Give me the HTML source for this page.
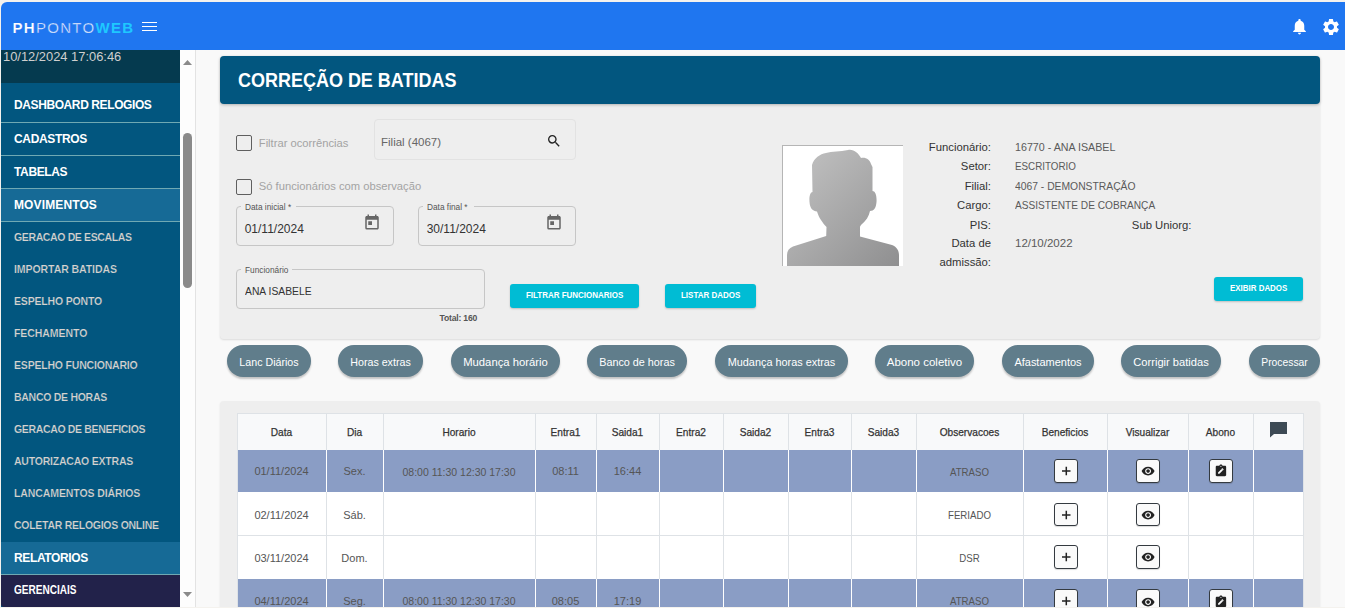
<!DOCTYPE html>
<html><head><meta charset="utf-8">
<style>
*{box-sizing:border-box;margin:0;padding:0}
html,body{width:1345px;height:608px;overflow:hidden;background:#f4f2ee;font-family:"Liberation Sans",sans-serif}
.a{position:absolute}
.t{position:absolute;line-height:1;white-space:nowrap}
#app{position:absolute;left:1px;top:2px;width:1344px;height:605px;background:#f9f9f9;border-top-left-radius:6px;overflow:hidden}
</style></head><body>
<div id="app"></div>

<!-- top bar -->
<div class="a" style="left:1px;top:2px;width:1344px;height:48px;background:#1f76f0;border-top-left-radius:6px"></div>
<div class="t" style="left:12.5px;top:20.4px;font-size:15px;letter-spacing:1.3px;color:#fff"><b style="-webkit-text-stroke:0.2px #1f76f0">PH</b><span style="font-weight:400;-webkit-text-stroke:0.45px #1f76f0">PONTO</span><b style="color:#1ec8ff">WEB</b></div>
<div class="a" style="left:142px;top:22px;width:15px;height:1.4px;background:#fff"></div>
<div class="a" style="left:142px;top:26px;width:15px;height:1.4px;background:#fff"></div>
<div class="a" style="left:142px;top:30px;width:15px;height:1.4px;background:#fff"></div>

<svg class="a" style="left:1290px;top:17px" width="19" height="19" viewBox="0 0 24 24"><path fill="#fff" d="M12 22c1.1 0 2-.9 2-2h-4c0 1.1.9 2 2 2zm6-6v-5c0-3.07-1.64-5.64-4.5-6.32V4c0-.83-.67-1.5-1.5-1.5s-1.5.67-1.5 1.5v.68C7.63 5.36 6 7.92 6 11v5l-2 2v1h16v-1l-2-2z"/></svg>
<svg class="a" style="left:1321px;top:16.5px" width="20" height="20" viewBox="0 0 24 24"><path fill="#fff" d="M19.14 12.94c.04-.3.06-.61.06-.94 0-.32-.02-.64-.07-.94l2.03-1.58a.49.49 0 0 0 .12-.61l-1.92-3.32a.488.488 0 0 0-.59-.22l-2.39.96c-.5-.38-1.03-.7-1.62-.94l-.36-2.54a.484.484 0 0 0-.48-.41h-3.84c-.24 0-.43.17-.47.41l-.36 2.54c-.59.24-1.13.57-1.62.94l-2.39-.96c-.22-.08-.47 0-.59.22L2.74 8.87c-.12.21-.08.47.12.61l2.03 1.58c-.05.3-.09.63-.09.94s.02.64.07.94l-2.03 1.58a.49.49 0 0 0-.12.61l1.92 3.32c.12.22.37.29.59.22l2.39-.96c.5.38 1.03.7 1.62.94l.36 2.54c.05.24.24.41.48.41h3.84c.24 0 .44-.17.47-.41l.36-2.54c.59-.24 1.13-.56 1.62-.94l2.39.96c.22.08.47 0 .59-.22l1.92-3.32c.12-.22.07-.47-.12-.61l-2.01-1.58zM12 15.6c-1.98 0-3.6-1.62-3.6-3.6s1.62-3.6 3.6-3.6 3.6 1.62 3.6 3.6-1.62 3.6-3.6 3.6z"/></svg>

<!-- sidebar -->
<div class="a" style="left:1px;top:50px;width:179px;height:557px;background:#02567f"></div>
<div class="a" style="left:1px;top:50px;width:179px;height:33px;background:#053a4f"></div>
<div class="t" style="left:3px;top:50.5px;font-size:12.9px;color:#cfcfcf">10/12/2024 17:06:46</div>

<div class="a" style="left:1px;top:188px;width:179px;height:33px;background:#166a96"></div>
<div class="a" style="left:1px;top:542px;width:179px;height:32px;background:#166a96"></div>
<div class="a" style="left:1px;top:575px;width:179px;height:32px;background:#22224a;border-bottom-left-radius:3px"></div>
<div class="a" style="left:1px;top:122px;width:179px;height:1px;background:#6fa9b3"></div>
<div class="a" style="left:1px;top:155px;width:179px;height:1px;background:#6fa9b3"></div>
<div class="a" style="left:1px;top:188px;width:179px;height:1px;background:#6fa9b3"></div>
<div class="a" style="left:1px;top:221px;width:179px;height:1px;background:#6fa9b3"></div>
<div class="a" style="left:1px;top:574px;width:179px;height:1px;background:#6fa9b3"></div>

<div class="t" style="left:14px;top:98.7px;font-size:12px;font-weight:700;letter-spacing:-0.4px;color:#fff">DASHBOARD RELOGIOS</div>
<div class="t" style="left:14px;top:132.9px;font-size:12px;font-weight:700;letter-spacing:-0.34px;color:#fff">CADASTROS</div>
<div class="t" style="left:14px;top:165.7px;font-size:12px;font-weight:700;letter-spacing:-0.36px;color:#fff">TABELAS</div>
<div class="t" style="left:14px;top:198.5px;font-size:12px;font-weight:700;letter-spacing:0.12px;color:#fff">MOVIMENTOS</div>

<div class="t" style="left:14px;top:231.9px;font-size:10.5px;font-weight:700;letter-spacing:-0.37px;-webkit-text-stroke:0.2px #02567f;color:#d6d3d0">GERACAO DE ESCALAS</div>
<div class="t" style="left:14px;top:263.9px;font-size:10.5px;font-weight:700;letter-spacing:-0.07px;-webkit-text-stroke:0.2px #02567f;color:#d6d3d0">IMPORTAR BATIDAS</div>
<div class="t" style="left:14px;top:295.9px;font-size:10.5px;font-weight:700;letter-spacing:-0.17px;-webkit-text-stroke:0.2px #02567f;color:#d6d3d0">ESPELHO PONTO</div>
<div class="t" style="left:14px;top:327.9px;font-size:10.5px;font-weight:700;letter-spacing:-0.06px;-webkit-text-stroke:0.2px #02567f;color:#d6d3d0">FECHAMENTO</div>
<div class="t" style="left:14px;top:359.9px;font-size:10.5px;font-weight:700;letter-spacing:-0.19px;-webkit-text-stroke:0.2px #02567f;color:#d6d3d0">ESPELHO FUNCIONARIO</div>
<div class="t" style="left:14px;top:391.9px;font-size:10.5px;font-weight:700;letter-spacing:-0.28px;-webkit-text-stroke:0.2px #02567f;color:#d6d3d0">BANCO DE HORAS</div>
<div class="t" style="left:14px;top:423.9px;font-size:10.5px;font-weight:700;letter-spacing:-0.34px;-webkit-text-stroke:0.2px #02567f;color:#d6d3d0">GERACAO DE BENEFICIOS</div>
<div class="t" style="left:14px;top:455.9px;font-size:10.5px;font-weight:700;letter-spacing:-0.21px;-webkit-text-stroke:0.2px #02567f;color:#d6d3d0">AUTORIZACAO EXTRAS</div>
<div class="t" style="left:14px;top:487.9px;font-size:10.5px;font-weight:700;letter-spacing:-0.1px;-webkit-text-stroke:0.2px #02567f;color:#d6d3d0">LANCAMENTOS DIÁRIOS</div>
<div class="t" style="left:14px;top:519.9px;font-size:10.5px;font-weight:700;letter-spacing:-0.27px;-webkit-text-stroke:0.2px #02567f;color:#d6d3d0">COLETAR RELOGIOS ONLINE</div>
<div class="t" style="left:14px;top:551.5px;font-size:12px;font-weight:700;letter-spacing:-0.36px;color:#fff">RELATORIOS</div>
<div class="t" style="left:14px;top:584.2px;font-size:12px;font-weight:700;transform:scaleX(0.838);transform-origin:0 0;color:#fff">GERENCIAIS</div>

<!-- sidebar scrollbar -->
<div class="a" style="left:180px;top:50px;width:15px;height:557px;background:#fdfdfd"></div>
<div class="a" style="left:195px;top:50px;width:1px;height:557px;background:#e3e3e3"></div>
<div class="a" style="left:183px;top:133px;width:9px;height:155px;background:#8a8a8a;border-radius:5px"></div>
<svg class="a" style="left:182px;top:59px" width="11" height="7"><path d="M1 6 L5.5 1 L10 6Z" fill="#8a8a8a"/></svg>
<svg class="a" style="left:182px;top:590.8px" width="11" height="7"><path d="M1 1 L5.5 6 L10 1Z" fill="#8a8a8a"/></svg>


<!-- main cards -->
<div class="a" style="left:220px;top:56px;width:1100px;height:283px;background:#eeeeee;border-radius:4px;box-shadow:0 1px 2px rgba(0,0,0,0.12)"></div>
<div class="a" style="left:220px;top:56px;width:1100px;height:48px;background:#02567f;border-radius:4px;box-shadow:0 1px 3px rgba(0,0,0,0.25)"></div>
<div class="t" style="left:238px;top:70px;font-size:20px;font-weight:700;transform:scaleX(0.899);transform-origin:0 0;color:#fff">CORREÇÃO DE BATIDAS</div>

<!-- checkboxes -->
<div class="a" style="left:236px;top:135px;width:16px;height:16px;border:1.6px solid #5f5f5f;border-radius:2px"></div>
<div class="t" style="left:258.8px;top:138.3px;font-size:11.2px;color:#a3a3a3">Filtrar ocorrências</div>
<div class="a" style="left:236px;top:179px;width:16px;height:16px;border:1.6px solid #5f5f5f;border-radius:2px"></div>
<div class="t" style="left:258.8px;top:181.3px;font-size:11.2px;color:#a3a3a3">Só funcionários com observação</div>

<!-- filial -->
<div class="a" style="left:373.5px;top:118.5px;width:202px;height:41px;border:1px solid #e2e2e2;border-radius:4px"></div>
<div class="t" style="left:381px;top:136.6px;font-size:11.5px;color:#666">Filial (4067)</div>
<svg class="a" style="left:546px;top:133px" width="16" height="16" viewBox="0 0 24 24"><path fill="#222" d="M15.5 14h-.79l-.28-.27A6.471 6.471 0 0 0 16 9.5 6.5 6.5 0 1 0 9.5 16c1.61 0 3.09-.59 4.23-1.57l.27.28v.79l5 4.99L20.49 19l-4.99-5zm-6 0C7.01 14 5 11.99 5 9.5S7.01 5 9.5 5 14 7.01 14 9.5 11.99 14 9.5 14z"/></svg>

<!-- date fields -->
<div class="a" style="left:236px;top:206.2px;width:157.5px;height:40px;border:1px solid #c6c6c6;border-radius:4px"></div>
<div class="a" style="left:241px;top:205px;width:55px;height:3px;background:#eeeeee"></div>
<div class="t" style="left:245px;top:203.2px;font-size:8.3px;color:#555">Data inicial *</div>
<div class="t" style="left:244.7px;top:223.3px;font-size:12px;color:#333">01/11/2024</div>
<svg class="a" style="left:362.8px;top:212.8px" width="18" height="18" viewBox="0 0 24 24"><path fill="#666" d="M19 4h-1V2h-2v2H8V2H6v2H5c-1.11 0-2 .9-2 2v14a2 2 0 0 0 2 2h14c1.1 0 2-.9 2-2V6c0-1.1-.9-2-2-2zm0 16H5V9h14v11zM7 11h5v5H7z"/></svg>

<div class="a" style="left:418px;top:206.2px;width:157.5px;height:40px;border:1px solid #c6c6c6;border-radius:4px"></div>
<div class="a" style="left:423px;top:205px;width:51px;height:3px;background:#eeeeee"></div>
<div class="t" style="left:427px;top:203.2px;font-size:8.3px;color:#555">Data final *</div>
<div class="t" style="left:426.7px;top:223.3px;font-size:12px;color:#333">30/11/2024</div>
<svg class="a" style="left:544.8px;top:212.8px" width="18" height="18" viewBox="0 0 24 24"><path fill="#666" d="M19 4h-1V2h-2v2H8V2H6v2H5c-1.11 0-2 .9-2 2v14a2 2 0 0 0 2 2h14c1.1 0 2-.9 2-2V6c0-1.1-.9-2-2-2zm0 16H5V9h14v11zM7 11h5v5H7z"/></svg>

<!-- funcionario -->
<div class="a" style="left:236px;top:268.5px;width:249px;height:40px;border:1px solid #c6c6c6;border-radius:4px"></div>
<div class="a" style="left:241px;top:267px;width:51px;height:3px;background:#eeeeee"></div>
<div class="t" style="left:245px;top:265.5px;font-size:8.3px;color:#555">Funcionário</div>
<div class="t" style="left:244.7px;top:285.2px;font-size:11.7px;transform:scaleX(0.883);transform-origin:0 0;color:#333">ANA ISABELE</div>
<div class="t" style="left:439.6px;top:313.9px;font-size:8.6px;font-weight:700;letter-spacing:-0.2px;color:#555">Total: 160</div>

<!-- buttons -->
<div class="a" style="left:510px;top:284px;width:129px;height:24px;background:#00bcd4;border-radius:3px;box-shadow:0 1px 2px rgba(0,0,0,0.2)"></div>
<div class="t" style="left:526px;top:289.6px;font-size:9.5px;font-weight:700;transform:scaleX(0.839);transform-origin:0 0;color:#fff">FILTRAR FUNCIONARIOS</div>
<div class="a" style="left:665px;top:284px;width:91px;height:24px;background:#00bcd4;border-radius:3px;box-shadow:0 1px 2px rgba(0,0,0,0.2)"></div>
<div class="t" style="left:681px;top:289.6px;font-size:9.5px;font-weight:700;transform:scaleX(0.84);transform-origin:0 0;color:#fff">LISTAR DADOS</div>
<div class="a" style="left:1214px;top:277px;width:89px;height:23.5px;background:#00bcd4;border-radius:3px;box-shadow:0 1px 2px rgba(0,0,0,0.2)"></div>
<div class="t" style="left:1230px;top:282.8px;font-size:9.5px;font-weight:700;transform:scaleX(0.835);transform-origin:0 0;color:#fff">EXIBIR DADOS</div>


<!-- photo -->
<div class="a" style="left:782px;top:145px;width:120.5px;height:121px;background:#fff;border-top:1px solid #b5b5b5;border-left:1px solid #b5b5b5"></div>
<svg class="a" style="left:782px;top:145px" width="121" height="121" viewBox="0 0 121 121">
<defs><linearGradient id="g" x1="0" y1="0" x2="1" y2="1"><stop offset="0" stop-color="#c4c4c4"/><stop offset="1" stop-color="#8f8f90"/></linearGradient></defs>
<path fill="url(#g)" d="M66 5 C72 4 76 8 79 13 C84 12 88 15 89 19 L90.5 22 L90.5 46 C93 46 95 50 94.5 57 C94 63 92 66 88 66 C87 71 84 76 79 80 L78 81.7 L78 91.5 L110 100 C115 102 117 106 117 110 L117 121 L5 121 L5 110 C5 106 7 103 11 101.5 L44.2 91 L44.5 82 C40 77 37 73 35 66.5 C31 66 28 64 27.5 57 C27 51 28.5 47 30.5 47 L30 20 C32 13 38 9 44 8 C50 6 58 7 66 5Z"/>
</svg>

<div class="t" style="left:850px;width:141px;text-align:right;top:142.3px;font-size:11.3px;color:#333">Funcionário:</div>
<div class="t" style="left:1014.8px;top:142.3px;font-size:11px;transform:scaleX(0.972);transform-origin:0 0;color:#5a5a5a">16770 - ANA ISABEL</div>
<div class="t" style="left:850px;width:141px;text-align:right;top:161.1px;font-size:11.3px;color:#333">Setor:</div>
<div class="t" style="left:1014.8px;top:161.1px;font-size:11px;transform:scaleX(0.893);transform-origin:0 0;color:#5a5a5a">ESCRITORIO</div>
<div class="t" style="left:850px;width:141px;text-align:right;top:180.7px;font-size:11.3px;color:#333">Filial:</div>
<div class="t" style="left:1014.8px;top:180.7px;font-size:11px;transform:scaleX(0.939);transform-origin:0 0;color:#5a5a5a">4067 - DEMONSTRAÇÃO</div>
<div class="t" style="left:850px;width:141px;text-align:right;top:200.0px;font-size:11.3px;color:#333">Cargo:</div>
<div class="t" style="left:1014.8px;top:200.0px;font-size:11px;transform:scaleX(0.921);transform-origin:0 0;color:#5a5a5a">ASSISTENTE DE COBRANÇA</div>
<div class="t" style="left:850px;width:141px;text-align:right;top:219.5px;font-size:11.3px;color:#333">PIS:</div>
<div class="t" style="left:850px;width:141px;text-align:right;top:238.2px;font-size:11.3px;color:#333">Data de</div>
<div class="t" style="left:1014.8px;top:238.2px;font-size:11px;transform:scaleX(1.045);transform-origin:0 0;color:#5a5a5a">12/10/2022</div>
<div class="t" style="left:850px;width:141px;text-align:right;top:257.3px;font-size:11.3px;color:#333">admissão:</div>
<div class="t" style="left:1050px;width:141.5px;text-align:right;top:219.5px;font-size:11.3px;color:#333">Sub Uniorg:</div>

<!-- pills -->
<div class="a" style="left:227px;top:345px;width:84px;height:32px;border-radius:16px;background:#607d8b;box-shadow:0 2px 2px rgba(0,0,0,0.22)"></div>
<div class="t" style="left:227px;width:84px;text-align:center;top:357.3px;font-size:11.5px;transform:scaleX(0.927);color:#fff">Lanc Diários</div>
<div class="a" style="left:338px;top:345px;width:85px;height:32px;border-radius:16px;background:#607d8b;box-shadow:0 2px 2px rgba(0,0,0,0.22)"></div>
<div class="t" style="left:338px;width:85px;text-align:center;top:357.3px;font-size:11.5px;transform:scaleX(0.928);color:#fff">Horas extras</div>
<div class="a" style="left:451px;top:345px;width:109px;height:32px;border-radius:16px;background:#607d8b;box-shadow:0 2px 2px rgba(0,0,0,0.22)"></div>
<div class="t" style="left:451px;width:109px;text-align:center;top:357.3px;font-size:11.5px;transform:scaleX(0.981);color:#fff">Mudança horário</div>
<div class="a" style="left:587px;top:345px;width:100px;height:32px;border-radius:16px;background:#607d8b;box-shadow:0 2px 2px rgba(0,0,0,0.22)"></div>
<div class="t" style="left:587px;width:100px;text-align:center;top:357.3px;font-size:11.5px;transform:scaleX(0.939);color:#fff">Banco de horas</div>
<div class="a" style="left:715px;top:345px;width:133px;height:32px;border-radius:16px;background:#607d8b;box-shadow:0 2px 2px rgba(0,0,0,0.22)"></div>
<div class="t" style="left:715px;width:133px;text-align:center;top:357.3px;font-size:11.5px;transform:scaleX(0.945);color:#fff">Mudança horas extras</div>
<div class="a" style="left:875px;top:345px;width:99px;height:32px;border-radius:16px;background:#607d8b;box-shadow:0 2px 2px rgba(0,0,0,0.22)"></div>
<div class="t" style="left:875px;width:99px;text-align:center;top:357.3px;font-size:11.5px;transform:scaleX(1.000);color:#fff">Abono coletivo</div>
<div class="a" style="left:1002px;top:345px;width:92px;height:32px;border-radius:16px;background:#607d8b;box-shadow:0 2px 2px rgba(0,0,0,0.22)"></div>
<div class="t" style="left:1002px;width:92px;text-align:center;top:357.3px;font-size:11.5px;transform:scaleX(0.956);color:#fff">Afastamentos</div>
<div class="a" style="left:1121px;top:345px;width:100px;height:32px;border-radius:16px;background:#607d8b;box-shadow:0 2px 2px rgba(0,0,0,0.22)"></div>
<div class="t" style="left:1121px;width:100px;text-align:center;top:357.3px;font-size:11.5px;transform:scaleX(0.967);color:#fff">Corrigir batidas</div>
<div class="a" style="left:1249px;top:345px;width:71px;height:32px;border-radius:16px;background:#607d8b;box-shadow:0 2px 2px rgba(0,0,0,0.22)"></div>
<div class="t" style="left:1249px;width:71px;text-align:center;top:357.3px;font-size:11.5px;transform:scaleX(0.898);color:#fff">Processar</div>

<!-- table -->
<div class="a" style="left:220px;top:401px;width:1100px;height:220px;background:#eeeeee;border-radius:4px;box-shadow:0 1px 2px rgba(0,0,0,0.1)"></div>
<div class="a" style="left:237px;top:413px;width:1066px;height:37px;background:#f8f9fa"></div>
<div class="a" style="left:237px;top:450px;width:1066px;height:42px;background:#8a9dc5"></div>
<div class="a" style="left:237px;top:492px;width:1066px;height:87px;background:#ffffff"></div>
<div class="a" style="left:237px;top:579px;width:1066px;height:43px;background:#8a9dc5"></div>
<div class="a" style="left:237px;top:413px;width:1066px;height:1px;background:#dee2e6"></div>
<div class="a" style="left:237px;top:535px;width:1066px;height:1px;background:#dee2e6"></div>
<div class="a" style="left:237px;top:413px;width:1px;height:200px;background:#dee2e6"></div>
<div class="a" style="left:326px;top:413px;width:1px;height:200px;background:#dee2e6"></div>
<div class="a" style="left:383px;top:413px;width:1px;height:200px;background:#dee2e6"></div>
<div class="a" style="left:535px;top:413px;width:1px;height:200px;background:#dee2e6"></div>
<div class="a" style="left:596px;top:413px;width:1px;height:200px;background:#dee2e6"></div>
<div class="a" style="left:659px;top:413px;width:1px;height:200px;background:#dee2e6"></div>
<div class="a" style="left:723px;top:413px;width:1px;height:200px;background:#dee2e6"></div>
<div class="a" style="left:788px;top:413px;width:1px;height:200px;background:#dee2e6"></div>
<div class="a" style="left:851px;top:413px;width:1px;height:200px;background:#dee2e6"></div>
<div class="a" style="left:916px;top:413px;width:1px;height:200px;background:#dee2e6"></div>
<div class="a" style="left:1023px;top:413px;width:1px;height:200px;background:#dee2e6"></div>
<div class="a" style="left:1107px;top:413px;width:1px;height:200px;background:#dee2e6"></div>
<div class="a" style="left:1188px;top:413px;width:1px;height:200px;background:#dee2e6"></div>
<div class="a" style="left:1253px;top:413px;width:1px;height:200px;background:#dee2e6"></div>
<div class="a" style="left:1303px;top:413px;width:1px;height:200px;background:#dee2e6"></div>
<div class="a" style="left:326px;top:450px;width:1px;height:42px;background:#fff"></div>
<div class="a" style="left:326px;top:579px;width:1px;height:43px;background:#fff"></div>
<div class="a" style="left:383px;top:450px;width:1px;height:42px;background:#fff"></div>
<div class="a" style="left:383px;top:579px;width:1px;height:43px;background:#fff"></div>
<div class="a" style="left:535px;top:450px;width:1px;height:42px;background:#fff"></div>
<div class="a" style="left:535px;top:579px;width:1px;height:43px;background:#fff"></div>
<div class="a" style="left:596px;top:450px;width:1px;height:42px;background:#fff"></div>
<div class="a" style="left:596px;top:579px;width:1px;height:43px;background:#fff"></div>
<div class="a" style="left:659px;top:450px;width:1px;height:42px;background:#fff"></div>
<div class="a" style="left:659px;top:579px;width:1px;height:43px;background:#fff"></div>
<div class="a" style="left:723px;top:450px;width:1px;height:42px;background:#fff"></div>
<div class="a" style="left:723px;top:579px;width:1px;height:43px;background:#fff"></div>
<div class="a" style="left:788px;top:450px;width:1px;height:42px;background:#fff"></div>
<div class="a" style="left:788px;top:579px;width:1px;height:43px;background:#fff"></div>
<div class="a" style="left:851px;top:450px;width:1px;height:42px;background:#fff"></div>
<div class="a" style="left:851px;top:579px;width:1px;height:43px;background:#fff"></div>
<div class="a" style="left:916px;top:450px;width:1px;height:42px;background:#fff"></div>
<div class="a" style="left:916px;top:579px;width:1px;height:43px;background:#fff"></div>
<div class="a" style="left:1023px;top:450px;width:1px;height:42px;background:#fff"></div>
<div class="a" style="left:1023px;top:579px;width:1px;height:43px;background:#fff"></div>
<div class="a" style="left:1107px;top:450px;width:1px;height:42px;background:#fff"></div>
<div class="a" style="left:1107px;top:579px;width:1px;height:43px;background:#fff"></div>
<div class="a" style="left:1188px;top:450px;width:1px;height:42px;background:#fff"></div>
<div class="a" style="left:1188px;top:579px;width:1px;height:43px;background:#fff"></div>
<div class="a" style="left:1253px;top:450px;width:1px;height:42px;background:#fff"></div>
<div class="a" style="left:1253px;top:579px;width:1px;height:43px;background:#fff"></div>
<div class="t" style="left:237px;width:89px;text-align:center;top:426.7px;font-size:11px;transform:scaleX(0.92);-webkit-text-stroke:0.25px #333;color:#333">Data</div>
<div class="t" style="left:326px;width:57px;text-align:center;top:426.7px;font-size:11px;transform:scaleX(0.92);-webkit-text-stroke:0.25px #333;color:#333">Dia</div>
<div class="t" style="left:383px;width:152px;text-align:center;top:426.7px;font-size:11px;transform:scaleX(0.92);-webkit-text-stroke:0.25px #333;color:#333">Horario</div>
<div class="t" style="left:535px;width:61px;text-align:center;top:426.7px;font-size:11px;transform:scaleX(0.92);-webkit-text-stroke:0.25px #333;color:#333">Entra1</div>
<div class="t" style="left:596px;width:63px;text-align:center;top:426.7px;font-size:11px;transform:scaleX(0.92);-webkit-text-stroke:0.25px #333;color:#333">Saida1</div>
<div class="t" style="left:659px;width:64px;text-align:center;top:426.7px;font-size:11px;transform:scaleX(0.92);-webkit-text-stroke:0.25px #333;color:#333">Entra2</div>
<div class="t" style="left:723px;width:65px;text-align:center;top:426.7px;font-size:11px;transform:scaleX(0.92);-webkit-text-stroke:0.25px #333;color:#333">Saida2</div>
<div class="t" style="left:788px;width:63px;text-align:center;top:426.7px;font-size:11px;transform:scaleX(0.92);-webkit-text-stroke:0.25px #333;color:#333">Entra3</div>
<div class="t" style="left:851px;width:65px;text-align:center;top:426.7px;font-size:11px;transform:scaleX(0.92);-webkit-text-stroke:0.25px #333;color:#333">Saida3</div>
<div class="t" style="left:916px;width:107px;text-align:center;top:426.7px;font-size:11px;transform:scaleX(0.92);-webkit-text-stroke:0.25px #333;color:#333">Observacoes</div>
<div class="t" style="left:1023px;width:84px;text-align:center;top:426.7px;font-size:11px;transform:scaleX(0.92);-webkit-text-stroke:0.25px #333;color:#333">Beneficios</div>
<div class="t" style="left:1107px;width:81px;text-align:center;top:426.7px;font-size:11px;transform:scaleX(0.92);-webkit-text-stroke:0.25px #333;color:#333">Visualizar</div>
<div class="t" style="left:1188px;width:65px;text-align:center;top:426.7px;font-size:11px;transform:scaleX(0.92);-webkit-text-stroke:0.25px #333;color:#333">Abono</div>
<svg class="a" style="left:1269px;top:421px" width="19" height="17" viewBox="0 0 19 17"><path fill="#3d4a54" d="M1 1 H18 V13 H5 L1 16.5Z"/></svg>
<div class="t" style="left:237px;width:89px;text-align:center;top:466.2px;font-size:11px;color:#555">01/11/2024</div>
<div class="t" style="left:326px;width:57px;text-align:center;top:466.2px;font-size:11px;color:#555">Sex.</div>
<div class="t" style="left:383px;width:152px;text-align:center;top:466.5px;font-size:10.5px;color:#555">08:00 11:30 12:30 17:30</div>
<div class="t" style="left:535px;width:61px;text-align:center;top:466.2px;font-size:11px;color:#555">08:11</div>
<div class="t" style="left:596px;width:63px;text-align:center;top:466.2px;font-size:11px;color:#555">16:44</div>
<div class="t" style="left:916px;width:107px;text-align:center;top:466.5px;font-size:10.5px;transform:scaleX(0.92);color:#555">ATRASO</div>
<div class="a" style="left:1054px;top:459px;width:24px;height:23.5px;background:#fafafa;border:1px solid #343a40;border-radius:3px;box-shadow:0 1px 1px rgba(0,0,0,.15)"></div>
<svg class="a" style="left:1054px;top:459px" width="24" height="24"><path d="M12.3 7.8V16.3M8 12.1H16.5" stroke="#222" stroke-width="1.5"/></svg>
<div class="a" style="left:1136px;top:459px;width:24px;height:23.5px;background:#fafafa;border:1px solid #343a40;border-radius:3px;box-shadow:0 1px 1px rgba(0,0,0,.15)"></div>
<svg class="a" style="left:1141.4px;top:464.2px" width="14.2" height="14.2" viewBox="0 0 24 24"><path fill="#222" d="M12 4.5C7 4.5 2.73 7.61 1 12c1.73 4.39 6 7.5 11 7.5s9.27-3.11 11-7.5c-1.73-4.39-6-7.5-11-7.5zM12 17c-2.76 0-5-2.240-5-5s2.24-5 5-5 5 2.24 5 5-2.24 5-5 5zm0-8c-1.66 0-3 1.34-3 3s1.34 3 3 3 3-1.34 3-3-1.34-3-3-3z"/></svg>
<div class="a" style="left:1209px;top:459px;width:24px;height:23.5px;background:#fafafa;border:1px solid #343a40;border-radius:3px;box-shadow:0 1px 1px rgba(0,0,0,.15)"></div>
<svg class="a" style="left:1214.2px;top:464.1px" width="13.9" height="13.9" viewBox="0 0 24 24"><path fill="#222" d="M19 3h-4.18C14.4 1.84 13.3 1 12 1s-2.4.84-2.82 2H5c-1.1 0-2 .9-2 2v14c0 1.1.9 2 2 2h14c1.1 0 2-.9 2-2V5c0-1.1-.9-2-2-2zm-7 0c.55 0 1 .45 1 1s-.45 1-1 1-1-.45-1-1 .45-1 1-1zm-2.6 14H7v-2.4l6-6 2.4 2.4-6 6zm7.05-7.05l-1.2 1.2-2.4-2.4 1.2-1.2c.25-.25.65-.25.9 0l1.5 1.5c.25.25.25.65 0 .9z"/></svg>
<div class="t" style="left:237px;width:89px;text-align:center;top:509.7px;font-size:11px;color:#555">02/11/2024</div>
<div class="t" style="left:326px;width:57px;text-align:center;top:509.7px;font-size:11px;color:#555">Sáb.</div>
<div class="t" style="left:916px;width:107px;text-align:center;top:510.0px;font-size:10.5px;transform:scaleX(0.92);color:#555">FERIADO</div>
<div class="a" style="left:1054px;top:502.5px;width:24px;height:23.5px;background:#fafafa;border:1px solid #343a40;border-radius:3px;box-shadow:0 1px 1px rgba(0,0,0,.15)"></div>
<svg class="a" style="left:1054px;top:502.5px" width="24" height="24"><path d="M12.3 7.8V16.3M8 12.1H16.5" stroke="#222" stroke-width="1.5"/></svg>
<div class="a" style="left:1136px;top:502.5px;width:24px;height:23.5px;background:#fafafa;border:1px solid #343a40;border-radius:3px;box-shadow:0 1px 1px rgba(0,0,0,.15)"></div>
<svg class="a" style="left:1141.4px;top:507.7px" width="14.2" height="14.2" viewBox="0 0 24 24"><path fill="#222" d="M12 4.5C7 4.5 2.73 7.61 1 12c1.73 4.39 6 7.5 11 7.5s9.27-3.11 11-7.5c-1.73-4.39-6-7.5-11-7.5zM12 17c-2.76 0-5-2.240-5-5s2.24-5 5-5 5 2.24 5 5-2.24 5-5 5zm0-8c-1.66 0-3 1.34-3 3s1.34 3 3 3 3-1.34 3-3-1.34-3-3-3z"/></svg>
<div class="t" style="left:237px;width:89px;text-align:center;top:552.5px;font-size:11px;color:#555">03/11/2024</div>
<div class="t" style="left:326px;width:57px;text-align:center;top:552.5px;font-size:11px;color:#555">Dom.</div>
<div class="t" style="left:916px;width:107px;text-align:center;top:552.8px;font-size:10.5px;transform:scaleX(0.92);color:#555">DSR</div>
<div class="a" style="left:1054px;top:545px;width:24px;height:23.5px;background:#fafafa;border:1px solid #343a40;border-radius:3px;box-shadow:0 1px 1px rgba(0,0,0,.15)"></div>
<svg class="a" style="left:1054px;top:545px" width="24" height="24"><path d="M12.3 7.8V16.3M8 12.1H16.5" stroke="#222" stroke-width="1.5"/></svg>
<div class="a" style="left:1136px;top:545px;width:24px;height:23.5px;background:#fafafa;border:1px solid #343a40;border-radius:3px;box-shadow:0 1px 1px rgba(0,0,0,.15)"></div>
<svg class="a" style="left:1141.4px;top:550.2px" width="14.2" height="14.2" viewBox="0 0 24 24"><path fill="#222" d="M12 4.5C7 4.5 2.73 7.61 1 12c1.73 4.39 6 7.5 11 7.5s9.27-3.11 11-7.5c-1.73-4.39-6-7.5-11-7.5zM12 17c-2.76 0-5-2.240-5-5s2.24-5 5-5 5 2.24 5 5-2.24 5-5 5zm0-8c-1.66 0-3 1.34-3 3s1.34 3 3 3 3-1.34 3-3-1.34-3-3-3z"/></svg>
<div class="t" style="left:237px;width:89px;text-align:center;top:595.9px;font-size:11px;color:#555">04/11/2024</div>
<div class="t" style="left:326px;width:57px;text-align:center;top:595.9px;font-size:11px;color:#555">Seg.</div>
<div class="t" style="left:383px;width:152px;text-align:center;top:596.2px;font-size:10.5px;color:#555">08:00 11:30 12:30 17:30</div>
<div class="t" style="left:535px;width:61px;text-align:center;top:595.9px;font-size:11px;color:#555">08:05</div>
<div class="t" style="left:596px;width:63px;text-align:center;top:595.9px;font-size:11px;color:#555">17:19</div>
<div class="t" style="left:916px;width:107px;text-align:center;top:596.2px;font-size:10.5px;transform:scaleX(0.92);color:#555">ATRASO</div>
<div class="a" style="left:1054px;top:589.4px;width:24px;height:23.5px;background:#fafafa;border:1px solid #343a40;border-radius:3px;box-shadow:0 1px 1px rgba(0,0,0,.15)"></div>
<svg class="a" style="left:1054px;top:589.4px" width="24" height="24"><path d="M12.3 7.8V16.3M8 12.1H16.5" stroke="#222" stroke-width="1.5"/></svg>
<div class="a" style="left:1136px;top:589.4px;width:24px;height:23.5px;background:#fafafa;border:1px solid #343a40;border-radius:3px;box-shadow:0 1px 1px rgba(0,0,0,.15)"></div>
<svg class="a" style="left:1141.4px;top:594.6px" width="14.2" height="14.2" viewBox="0 0 24 24"><path fill="#222" d="M12 4.5C7 4.5 2.73 7.61 1 12c1.73 4.39 6 7.5 11 7.5s9.27-3.11 11-7.5c-1.73-4.39-6-7.5-11-7.5zM12 17c-2.76 0-5-2.240-5-5s2.24-5 5-5 5 2.24 5 5-2.24 5-5 5zm0-8c-1.66 0-3 1.34-3 3s1.34 3 3 3 3-1.34 3-3-1.34-3-3-3z"/></svg>
<div class="a" style="left:1209px;top:589.4px;width:24px;height:23.5px;background:#fafafa;border:1px solid #343a40;border-radius:3px;box-shadow:0 1px 1px rgba(0,0,0,.15)"></div>
<svg class="a" style="left:1214.2px;top:594.5px" width="13.9" height="13.9" viewBox="0 0 24 24"><path fill="#222" d="M19 3h-4.18C14.4 1.84 13.3 1 12 1s-2.4.84-2.82 2H5c-1.1 0-2 .9-2 2v14c0 1.1.9 2 2 2h14c1.1 0 2-.9 2-2V5c0-1.1-.9-2-2-2zm-7 0c.55 0 1 .45 1 1s-.45 1-1 1-1-.45-1-1 .45-1 1-1zm-2.6 14H7v-2.4l6-6 2.4 2.4-6 6zm7.05-7.05l-1.2 1.2-2.4-2.4 1.2-1.2c.25-.25.65-.25.9 0l1.5 1.5c.25.25.25.65 0 .9z"/></svg>
<!-- /table -->
<div class="a" style="left:0;top:607px;width:1345px;height:1px;background:#f4f2ee"></div>
</body></html>
